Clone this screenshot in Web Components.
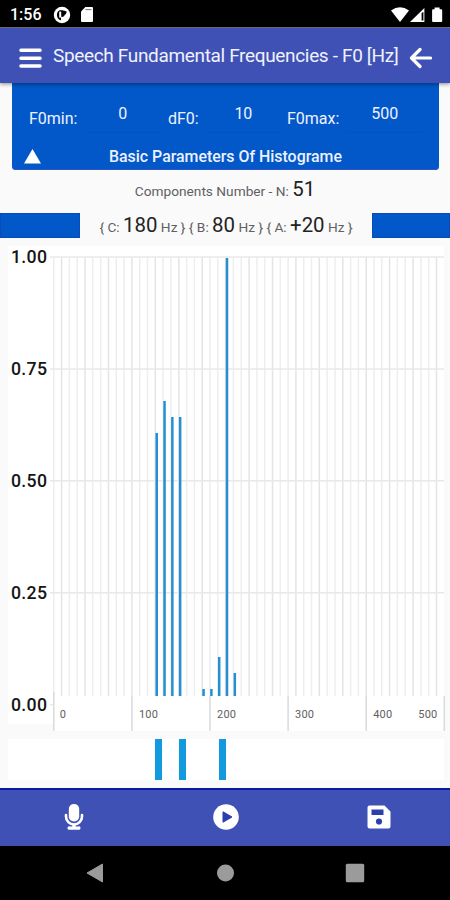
<!DOCTYPE html>
<html lang="en">
<head>
<meta charset="utf-8">
<title>Speech Fundamental Frequencies</title>
<style>
    html, body {
        margin: 0;
        height: 900px;
        overflow: hidden;
        background: #fafafa;
        font-family: Roboto, sans-serif;
    }
</style>
</head>
<body>
<speech-app></speech-app>

<script>
class BaseElement extends HTMLElement {
    constructor() {
        super();
        this.attachShadow({ mode: 'open' });
        const template = document.createElement('template');
        template.innerHTML = this.render();
        this.shadowRoot.appendChild(template.content.cloneNode(true));
    }
}

class StatusBar extends BaseElement {
    render() {
        return `
            <style>
                :host {
                    display: flex;
                    align-items: center;
                    box-sizing: border-box;
                    height: 28px;
                    padding: 2px 7px 0 10px;
                    background: #000;
                    border-bottom: 1px solid #77777c;
                    color: #fff;
                }
                .time {
                    width: 43px;
                    font-size: 16px;
                    font-weight: 500;
                }
                svg { display: block; fill: #fff; }
                .app { margin-right: 10px; }
                .right { margin-left: auto; }
            </style>
            <span class="time">1:56</span>
            <svg class="app" width="18" height="18" viewBox="0 0 18 18">
                <circle cx="9" cy="9" r="8.2"/>
                <path d="M6.600 4.200A5.500 5.500 0 0 0 8 14.200V10.800A2.800 2.800 0 0 0 9.600 4.200z" fill="#000"/>
                <path d="M6.200 5.600h2v6h-2z"/>
                <path d="M11.200 4.500l2.600 1.200-1.200 2.800-1.600-.8z" fill="#000"/>
            </svg>
            <svg width="12" height="15" viewBox="0 0 12 15">
                <path d="M4.400 0H11a1 1 0 0 1 1 1v13a1 1 0 0 1-1 1H1a1 1 0 0 1-1-1V4.600z"/>
                <path d="M4.500 2.600h6" stroke="#777" stroke-width="1"/>
            </svg>
            <svg class="right" width="52" height="16" viewBox="0 0 52 16">
                <path d="M0 3.600Q9 -3 18 3.600L9 15z"/>
                <path d="M33.400 1v14H19z"/>
                <path d="M30.600 6v7.400h1.800V5z" fill="#000"/>
                <path d="M43.600 .6h5v1.600h1.600a1 1 0 0 1 1 1v10.900a1 1 0 0 1-1 1h-8.100a1 1 0 0 1-1-1V3.200a1 1 0 0 1 1-1h1.500z"/>
            </svg>
        `;
    }
}

class AppHeader extends BaseElement {
    render() {
        return `
            <style>
                :host {
                    display: flex;
                    align-items: center;
                    box-sizing: border-box;
                    height: 55px;
                    padding: 4px 18px 0 18px;
                    background: #3f51b5;
                    color: #f0f1fc;
                    box-shadow: 0 1px 4px rgba(0, 0, 0, 0.45);
                    position: relative;
                    z-index: 1;
                }
                .title {
                    width: 356px;
                    margin-left: 11px;
                    padding-bottom: 4px;
                    font-size: 19px;
                    letter-spacing: -.34px;
                    line-height: 22px;
                    white-space: nowrap;
                }
                svg { display: block; flex: none; }
            </style>
            <svg width="24" height="24" viewBox="0 0 24 24">
                <path d="M3 4.300h19M3 12.200h19M3 20h19" stroke="#fff" stroke-width="3.600" stroke-linecap="round"/>
            </svg>
            <div class="title"><slot></slot></div>
            <svg width="23" height="24" viewBox="0 0 23 24">
                <path d="M21.500 12H3M11 3.500L2.500 12l8.500 8.500" fill="none" stroke="#fff" stroke-width="3.200" stroke-linecap="round" stroke-linejoin="round"/>
            </svg>
        `;
    }
}

class ParamField extends BaseElement {
    render() {
        return `
            <style>
                :host { display: flex; align-items: flex-end; }
                .label { font-size: 16px; line-height: 18px; padding-bottom: 5px; }
                .value {
                    flex: 1;
                    margin-left: var(--gap, 7px);
                    padding-bottom: 8px;
                    border-bottom: 1px solid #0851b8;
                    font-size: 16px;
                    line-height: 20px;
                    text-align: center;
                }
            </style>
            <span class="label"><slot name="label"></slot></span>
            <span class="value"><slot></slot></span>
        `;
    }
}

class ParamsPanel extends BaseElement {
    render() {
        return `
            <style>
                :host {
                    display: flex;
                    flex-direction: column;
                    box-sizing: border-box;
                    height: 87px;
                    margin: 0 11px 0 12px;
                    padding-top: 21px;
                    background: #0258c9;
                    border-radius: 0 0 4px 4px;
                    box-shadow: inset 0 -1px 0 #2f55c8;
                    color: #eef2ff;
                }
                .fields { display: grid; grid-template-columns: 132px 106px 130px; column-gap: 13px; padding-left: 17px; }
                .fields > :nth-child(n+2) { margin-left: -6px; }
                .footer { display: flex; align-items: center; margin-top: 13px; height: 20px; padding-left: 11px; }
                .caption { margin-left: 67px; font-size: 15.900px; font-weight: 500; white-space: nowrap; }
            </style>
            <div class="fields">
                <param-field><span slot="label">F0min:</span>0</param-field>
                <param-field style="--gap: 8px"><span slot="label">dF0:</span>10</param-field>
                <param-field><span slot="label">F0max:</span>500</param-field>
            </div>
            <div class="footer">
                <svg width="19" height="16" viewBox="0 0 19 16"><path d="M9.500 1L18 15.500H1z" fill="#fff"/></svg>
                <span class="caption"><slot></slot></span>
            </div>
        `;
    }
}

class SummaryInfo extends BaseElement {
    render() {
        return `
            <style>
                :host { display: block; color: #606064; font-size: 13.700px; white-space: nowrap; }
                b { font-weight: 400; font-size: 20.400px; color: #222; }
                .count {
                    height: 43px;
                    box-sizing: border-box;
                    padding-top: 7px;
                    line-height: 24px;
                    text-align: center;
                }
                .range { display: grid; grid-template: 25px / 80px 292px 78px; }
                .range i { background: #0258c9; box-shadow: inset 0 0 0 1px #0a4bb8; }
                .range span { line-height: 25px; text-align: center; }
            </style>
            <div class="count">Components Number - N: <b>51</b></div>
            <div class="range">
                <i></i>
                <span>{ C: <b>180</b> Hz } { B: <b>80</b> Hz } { A: <b>+20</b> Hz }</span>
                <i></i>
            </div>
        `;
    }
}

class HistogramChart extends BaseElement {
    render() {
        const step = 7.81;
        const left = 45.8;
        const top = 11;
        const bottom = 450;
        // index of the 10 Hz bin -> top of its bar
        const bars = [[13, 187], [14, 155], [15, 171], [16, 171], [19, 443], [20, 443], [21, 411], [22, 12], [23, 427]];
        let grid = '';
        for (let i = 0; i < 50; i++) {
            const x = left + i * step;
            grid += `<path d="M${x.toFixed(1)} ${top}V${bottom}" stroke="${i % 3 === 1 ? '#e4e4e4' : '#eeeeee'}" stroke-width="1.5"/>`;
        }
        const rows = ['1.00', '0.75', '0.50', '0.25', '0.00'].map((label, i) => {
            const y = 11 + i * 111.9;
            const end = i === 4 ? left : 436;
            return `<path d="M42 ${y}H${end}" stroke="#e8e8e8" stroke-width="1.5"/>
                <text class="y" x="3" y="${y + 6}">${label}</text>`;
        }).join('');
        const ticks = [0, 100, 200, 300, 400, 500].map((value, i) => {
            const x = left + i * 78.1;
            const tx = i === 5 ? x - 26 : x + (i ? 7 : 6);
            return `<path d="M${x} ${i ? bottom : 446}V485" stroke="#dadada" stroke-width="1.5"/>
                <text class="x" x="${tx}" y="471.5">${value}</text>`;
        }).join('');
        const drawn = bars.map(([i, y]) =>
            `<rect x="${(left + 1.4 + i * step - 1.25).toFixed(2)}" y="${y}" width="2.5" height="${bottom - y}"/>`).join('');
        return `
            <style>
                :host { display: block; height: 478px; margin: 8px 6px 0 8px; background: #fff; }
                svg { display: block; overflow: visible; }
                text { font-family: Roboto, sans-serif; }
                .y { font-size: 17.700px; font-weight: 500; fill: #151515; letter-spacing: .3px; }
                .x { font-size: 11px; fill: #606060; letter-spacing: .2px; }
                .bars { fill: #258fd2; }
            </style>
            <svg width="436" height="478" viewBox="0 0 436 478">
                <rect x="46" y="451" width="390" height="34" fill="#fff"/>
                ${grid}${rows}${ticks}
                <g class="bars">${drawn}</g>
            </svg>
        `;
    }
}

class ComponentStrip extends BaseElement {
    render() {
        return `
            <style>
                :host {
                    display: flex;
                    box-sizing: border-box;
                    height: 41px;
                    margin: 15px 6px 0 8px;
                    padding-left: 147px;
                    background: #fff;
                }
                i { width: 7px; height: 41px; margin-right: 17.300px; background: #129ade; }
                i:nth-of-type(2) { margin-right: 33px; }
            </style>
            <i></i><i></i><i></i>
        `;
    }
}

class ActionBar extends BaseElement {
    render() {
        return `
            <style>
                :host {
                    display: grid;
                    grid-template-columns: 148px 1fr 143px;
                    align-items: center;
                    justify-items: center;
                    box-sizing: border-box;
                    height: 58px;
                    margin-top: 8px;
                    padding-bottom: 2px;
                    background: #3f51b5;
                    border-top: 2px solid #0b179c;
                }
                svg { display: block; fill: #fff; }
                .play { margin-right: 4px; }
            </style>
            <svg width="20" height="28" viewBox="0 0 20 28">
                <rect x="4.800" y="1" width="10.400" height="17.500" rx="5"/>
                <path d="M2 12v1.500a8 8 0 0 0 16 0V12" fill="none" stroke="#fff" stroke-width="2.600" stroke-linecap="round"/>
                <path d="M8.300 21h3.400v2.500H14a1.700 1.700 0 0 1 1.500 3.200h-11A1.700 1.700 0 0 1 6 23.500h2.300z"/>
            </svg>
            <svg class="play" width="26" height="26" viewBox="0 0 26 26">
                <circle cx="13" cy="13" r="12.800"/>
                <path d="M10 7.800v10.400L19 13z" fill="#2c3fae" stroke="#2c3fae" stroke-linejoin="round"/>
            </svg>
            <svg width="24" height="24" viewBox="0 0 24 24">
                <path d="M2.500 .5h15l6 6v15a2 2 0 0 1-2 2h-19a2 2 0 0 1-2-2v-19a2 2 0 0 1 2-2z"/>
                <path d="M4.500 4.500h12v5.500h-12z" fill="#2c3fae"/>
                <circle cx="12" cy="16.500" r="3.100" fill="#2c3fae"/>
            </svg>
        `;
    }
}

class NavBar extends BaseElement {
    render() {
        return `
            <style>
                :host {
                    display: flex;
                    align-items: center;
                    justify-content: space-between;
                    height: 54px;
                    padding: 0 85px 0 86px;
                    background: #000;
                }
                svg { display: block; fill: #9b9b9b; }
            </style>
            <svg width="18" height="20" viewBox="0 0 18 20"><path d="M16.500 1v18L1 10z" stroke="#9b9b9b" stroke-linejoin="round"/></svg>
            <svg width="18" height="18" viewBox="0 0 18 18"><circle cx="9.500" cy="9" r="8.500"/></svg>
            <svg width="20" height="20" viewBox="0 0 20 20"><rect x=".8" y=".8" width="18.400" height="18.400" rx="1.500"/></svg>
        `;
    }
}

class SpeechApp extends BaseElement {
    render() {
        return `
            <style>
                :host { display: flex; flex-direction: column; width: 450px; height: 900px; }
                :host > * { flex: none; }
                status-bar, app-header, params-panel, summary-info,
                histogram-chart, component-strip, action-bar, nav-bar { flex: none; }
            </style>
            <status-bar></status-bar>
            <app-header>Speech Fundamental Frequencies - F0 [Hz]</app-header>
            <params-panel>Basic Parameters Of Histograme</params-panel>
            <summary-info></summary-info>
            <histogram-chart></histogram-chart>
            <component-strip></component-strip>
            <action-bar></action-bar>
            <nav-bar></nav-bar>
        `;
    }
}

customElements.define('status-bar', StatusBar);
customElements.define('app-header', AppHeader);
customElements.define('param-field', ParamField);
customElements.define('params-panel', ParamsPanel);
customElements.define('summary-info', SummaryInfo);
customElements.define('histogram-chart', HistogramChart);
customElements.define('component-strip', ComponentStrip);
customElements.define('action-bar', ActionBar);
customElements.define('nav-bar', NavBar);
customElements.define('speech-app', SpeechApp);
</script>
</body>
</html>
